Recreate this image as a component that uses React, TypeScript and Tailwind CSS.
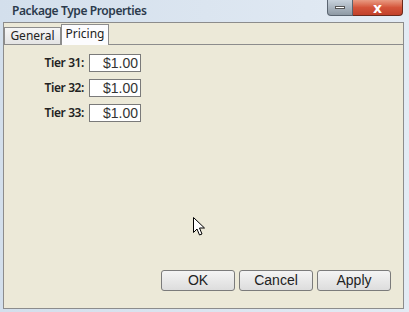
import React from 'react';

const tiers = [
  { label: 'Tier 31:', value: '$1.00' },
  { label: 'Tier 32:', value: '$1.00' },
  { label: 'Tier 33:', value: '$1.00' },
];

const Cursor = () => (
  <svg width="13" height="20" viewBox="0 0 13 20" className="absolute left-[193px] top-[217px]">
    <path d="M0.5 0.5 L0.5 15.5 L4 12 L6.5 18 L9 17 L6.5 11 L11.5 11 Z" fill="#fff" stroke="#000" strokeWidth="1" strokeLinejoin="round" />
  </svg>
);

const App = () => {
  return (
    <div className="relative w-[409px] h-[312px] flex flex-col bg-gradient-to-r from-[#d3dfec] to-[#e3ebf4] overflow-hidden" style={{ fontFamily: '"Noto Sans", "Liberation Sans", sans-serif' }}>
      {/* title bar */}
      <div className="relative h-[22px] flex items-center pl-3">
        <span className="text-[12px] font-semibold text-[#2b3a4c] tracking-[-0.4px]">Package Type Properties</span>
        <div className="absolute top-0 right-[6px] flex">
          <div className="w-[26px] h-[16px] flex items-center justify-center border border-t-0 border-[#5a6470] rounded-bl-[4px] bg-gradient-to-b from-[#c8d2dc] to-[#8e99a4]">
            <span className="block w-[10px] h-[3px] bg-white border border-[#555]" />
          </div>
          <div className="w-[50px] h-[16px] flex items-center justify-center border border-t-0 border-l-0 border-[#6a2a1c] rounded-br-[4px] bg-gradient-to-b from-[#e89a82] via-[#d4543a] to-[#c1412b]">
            <span className="text-white font-bold text-[14px] leading-none" style={{ fontFamily: '"DejaVu Sans", sans-serif' }}>x</span>
          </div>
        </div>
      </div>

      {/* frame */}
      <div className="ml-[3px] mr-[5px] h-[287px] border border-[#8c8c8c] bg-[#ece9d8] flex flex-col">
        {/* tab strip */}
        <div className="h-[22px] flex items-end border-b border-[#8c8c8c]">
          <div className="h-[18px] w-[57px] -mb-px border border-[#8c8c8c] bg-gradient-to-b from-[#f6f6f6] to-[#e4e4e4] flex items-center justify-center text-[12px] text-[#222]">
            General
          </div>
          <div className="h-[21px] w-[48px] -mb-px border border-b-0 border-[#8c8c8c] bg-[#fcfcfe] flex items-center justify-center text-[12px] text-[#222] pb-[2px]">
            Pricing
          </div>
        </div>

        {/* content */}
        <div className="flex-1 flex flex-col pt-[9px]">
          <div className="flex flex-col gap-[7px]">
            {tiers.map((t) => (
              <div key={t.label} className="flex items-center">
                <span className="w-[81px] pr-[1px] text-right text-[12px] font-semibold tracking-[-0.4px] text-[#222]">{t.label}</span>
                <div className="ml-[4px] w-[52px] h-[18px] border border-[#7a7a7a] bg-white flex items-center justify-end pr-[2px] text-[14px] text-[#333]" style={{ fontFamily: '"Liberation Sans", sans-serif' }}>
                  {t.value}
                </div>
              </div>
            ))}
          </div>

          <div className="mt-auto mb-[17px] mr-[12px] flex justify-end gap-[4px]" style={{ fontFamily: '"Liberation Sans", sans-serif' }}>
            {['OK', 'Cancel', 'Apply'].map((b) => (
              <button key={b} className="w-[74px] h-[21px] border border-[#7b7b7b] rounded-[3px] bg-gradient-to-b from-[#f4f4f4] to-[#dddddd] text-[14px] text-[#222] flex items-center justify-center">
                {b}
              </button>
            ))}
          </div>
        </div>
      </div>

      <Cursor />
    </div>
  );
};

export default App;
